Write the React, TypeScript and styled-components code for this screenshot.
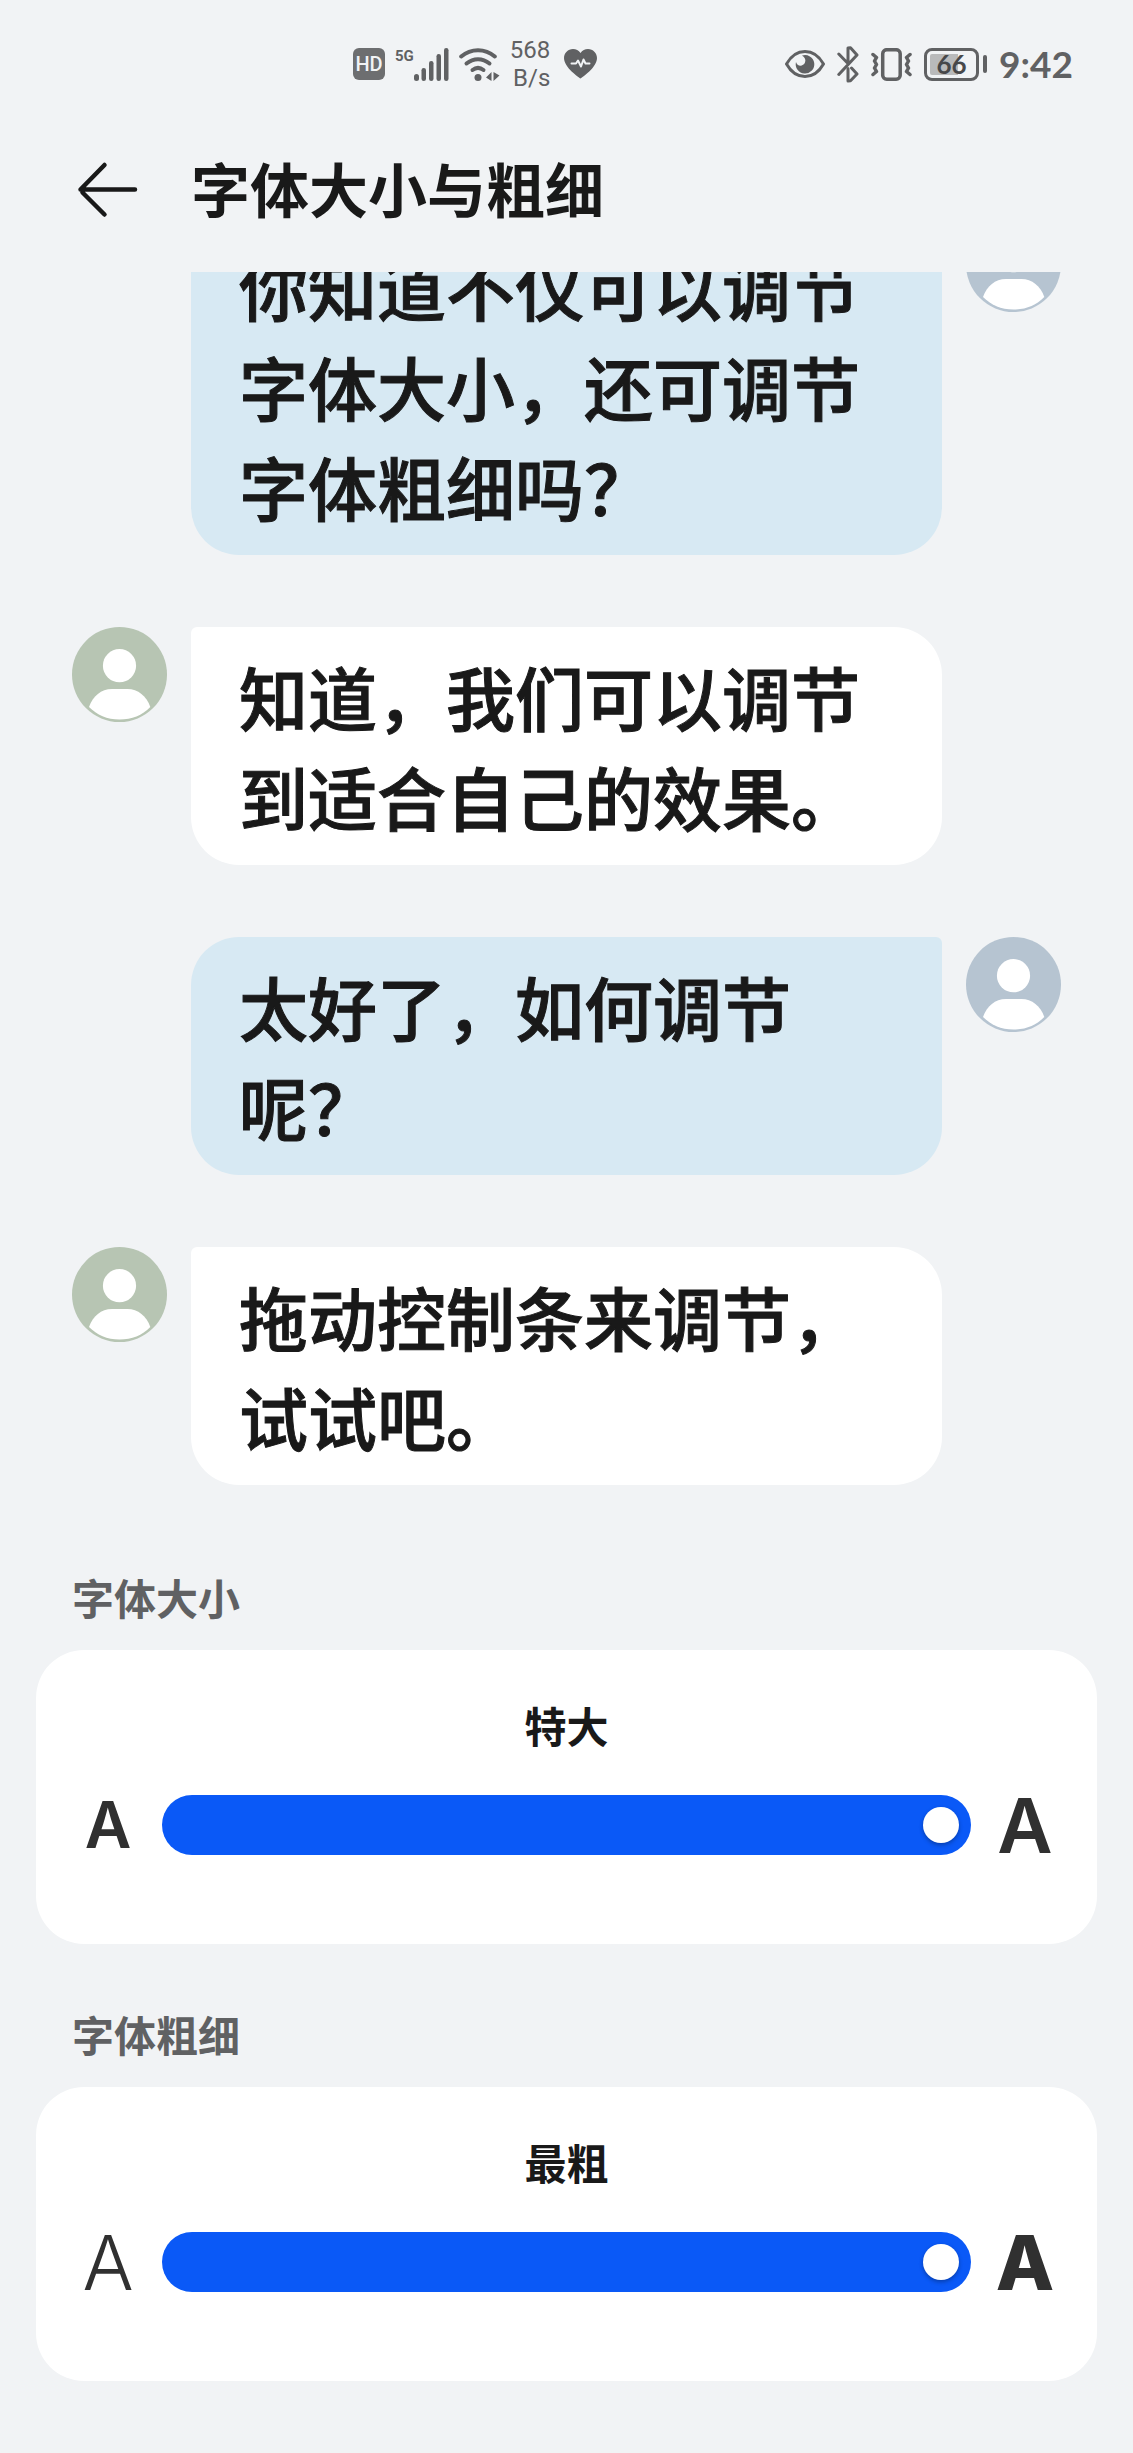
import React, { useId, useState } from 'react';
import styled, { createGlobalStyle } from 'styled-components';

const color = {
  page: '#f1f3f5',
  card: '#ffffff',
  mine: '#d7e9f3',
  ink: '#191919',
  letter: '#303030',
  muted: '#606163',
  accent: '#0a59f7',
  rest: '#e5e7ea',
  green: '#b7c5b3',
  blue: '#b6c4d1',
};

const cjk = '"Noto Sans CJK SC", sans-serif';

const GlobalStyle = createGlobalStyle`
  *, *::before, *::after { box-sizing: border-box; }
  body {
    margin: 0;
    background: ${color.page};
    color: ${color.ink};
    font-family: ${cjk};
  }
`;

const Screen = styled.div`
  display: flex;
  flex-direction: column;
  height: 100vh;
`;

const StatusBar = styled.div`
  display: flex;
  flex: none;
  align-items: center;
  justify-content: space-between;
  height: 128px;
  padding: 0 60px 0 353px;
  color: ${color.muted};
`;

const StatusGroup = styled.div<{ $gap: number }>`
  display: flex;
  align-items: center;
  gap: ${(p) => p.$gap}px;

  svg {
    display: block;
    flex: none;
  }
`;

const HdBadge = styled.span`
  width: 32px;
  border-radius: 6px;
  background: #6d6e70;
  color: ${color.page};
  font: 500 20px/32px Roboto, sans-serif;
  text-align: center;
`;

const Signal = styled.span`
  display: flex;
  align-items: flex-start;
`;

const Network = styled.span`
  font: 700 15px/16px "Liberation Sans Narrow", Roboto, sans-serif;
`;

const Speed = styled.span`
  margin-right: 4px;
  font: 400 24px/28px Roboto, sans-serif;
  text-align: right;
`;

const Battery = styled.span`
  display: flex;
  align-items: center;
  gap: 4px;
`;

const BatteryCell = styled.span`
  width: 55px;
  padding: 3px;
  border: 3px solid ${color.muted};
  border-radius: 8px;
`;

const BatteryLevel = styled.span`
  display: flex;
  justify-content: center;
  border-radius: 2px;
  background: linear-gradient(to right, #b9babb 66%, transparent 66%);
  color: #47484a;
  font: 700 26px/21px Lato, sans-serif;
`;

const BatteryTip = styled.span`
  width: 4px;
  height: 18px;
  border-radius: 2px;
  background: ${color.muted};
`;

const Clock = styled.span`
  font: 700 37px/40px Lato, sans-serif;
`;

const Header = styled.header`
  display: flex;
  flex: none;
  align-items: center;
  gap: 47px;
  height: 144px;
  padding: 0 72px 20px;
`;

const BackButton = styled.button`
  display: flex;
  padding: 0;
  border: 0;
  background: none;
  color: ${color.ink};
  cursor: pointer;
`;

const Title = styled.h1`
  margin: 0;
  padding-bottom: 4px;
  font-size: 59px;
  font-weight: 700;
  line-height: 84px;
`;

const Chat = styled.main`
  display: flex;
  flex: 1;
  flex-direction: column-reverse;
  min-height: 0;
  overflow-y: auto;
  scrollbar-width: none;
`;

const Messages = styled.div`
  display: flex;
  flex-direction: column;
  gap: 72px;
  padding: 0 72px 22px;
`;

const Message = styled.div`
  display: grid;
  grid-template-columns: 95px minmax(0, 1fr) 95px;
  align-items: start;
  gap: 24px;
`;

const Bubble = styled.p<{ $mine: boolean }>`
  grid-column: 2;
  grid-row: 1;
  margin: 0;
  padding: 19px 48px;
  border-radius: ${(p) => (p.$mine ? '48px 6px 48px 48px' : '6px 48px 48px 48px')};
  background: ${(p) => (p.$mine ? color.mine : color.card)};
  font-size: 69px;
  font-weight: 500;
  line-height: 100px;
  -webkit-text-stroke: 1px currentColor;
`;

const AvatarSlot = styled.svg<{ $mine: boolean }>`
  display: block;
  grid-column: ${(p) => (p.$mine ? 3 : 1)};
  grid-row: 1;
`;

const Section = styled.section`
  flex: none;
  padding: 60px 36px 0;

  &:last-child {
    padding-bottom: 72px;
  }
`;

const SectionTitle = styled.h2`
  margin: 0 36px 23px;
  color: ${color.muted};
  font-size: 42px;
  font-weight: 700;
  line-height: 60px;
`;

const Card = styled.div`
  padding: 45px 24px 89px;
  border-radius: 48px;
  background: ${color.card};
`;

const Value = styled.output`
  display: block;
  margin-bottom: 40px;
  font-size: 42px;
  font-weight: 700;
  line-height: 60px;
  text-align: center;
`;

const SliderRow = styled.div`
  display: grid;
  grid-template-columns: 96px minmax(0, 1fr) 96px;
  align-items: center;
  gap: 6px;
`;

const Letter = styled.span<{ $size: number; $weight: number }>`
  color: ${color.letter};
  font-family: Inter, sans-serif;
  font-size: ${(p) => p.$size}px;
  font-weight: ${(p) => p.$weight};
  line-height: 60px;
  text-align: center;
`;

const Range = styled.input`
  width: 100%;
  height: 60px;
  margin: 0;
  padding: 0 12px;
  border-radius: 30px;
  background: linear-gradient(to right, ${color.accent} var(--fill), ${color.rest} var(--fill));
  appearance: none;
  cursor: pointer;

  &::-webkit-slider-thumb {
    width: 36px;
    height: 36px;
    border-radius: 50%;
    background: #ffffff;
    box-shadow: 0 2px 4px rgba(0, 0, 0, 0.3);
    appearance: none;
  }
`;

function Avatar({ mine }: { mine: boolean }) {
  return (
    <AvatarSlot $mine={mine} width="95" height="95" viewBox="0 0 95 95" aria-hidden="true">
      <circle cx="47.5" cy="47.5" r="47.5" fill={mine ? color.blue : color.green} />
      <circle cx="47.5" cy="38.7" r="16.6" fill="#fff" />
      <path
        d="M17 80C21 69 29 62 40 62H55.500C66 62 74.500 69 78.300 80C70 88.500 60 92.500 47.500 92.500S25 88 17 80Z"
        fill="#fff"
      />
    </AvatarSlot>
  );
}

function SignalBars() {
  return (
    <svg width="35" height="33" viewBox="0 0 35 33" fill="currentColor" aria-hidden="true">
      <rect x="0" y="26" width="5" height="7" rx="2.500" />
      <rect x="7.500" y="20" width="4.500" height="13" rx="2.200" />
      <rect x="15" y="13" width="4.500" height="20" rx="2.200" />
      <rect x="22.500" y="6" width="4.500" height="27" rx="2.200" />
      <rect x="30" y="0" width="4.500" height="33" rx="2.200" />
    </svg>
  );
}

function WifiIcon() {
  return (
    <svg width="41" height="33" viewBox="0 0 41 33" fill="none" stroke="currentColor" strokeLinecap="round" aria-hidden="true">
      <path d="M2.200 8.500C12 0 26 0 35.800 8.500" strokeWidth="4" />
      <path d="M7.500 15.500C14.500 9.800 23.500 9.800 30.500 15.500" strokeWidth="4" />
      <path d="M13.500 22C17 19.300 21 19.300 24.500 22" strokeWidth="4" />
      <circle cx="19" cy="29.500" r="3.500" fill="currentColor" stroke="none" />
      <path d="M32.500 24V33L27 29.500ZM34.500 24L40.500 27.500L34.500 33Z" fill="currentColor" stroke="none" />
    </svg>
  );
}

function HeartIcon() {
  return (
    <svg width="33" height="30" viewBox="0 0 33 30" aria-hidden="true">
      <path
        d="M16.500 29.500C15 28.600 0 18.500 0 9C0 4 4 0 9 0C12 0 14.800 1.400 16.500 3.900C18.200 1.400 21 0 24 0C29 0 33 4 33 9C33 18.500 18 28.600 16.500 29.500Z"
        fill="currentColor"
      />
      <path
        d="M7.500 14.500H12L14 11.500L17 17.500L19.500 10.500L21.500 14.500H25.500"
        fill="none"
        stroke={color.page}
        strokeWidth="2"
        strokeLinecap="round"
        strokeLinejoin="round"
      />
    </svg>
  );
}

function EyeIcon() {
  return (
    <svg width="40" height="28" viewBox="0 0 40 28" aria-hidden="true">
      <path
        d="M1.500 14C6 6 12.500 1.500 20 1.500S34 6 38.500 14C34 22 27.500 26.500 20 26.500S6 22 1.500 14Z"
        fill="none"
        stroke="currentColor"
        strokeWidth="3"
        strokeLinejoin="round"
      />
      <path d="M17 5.500A9.300 9.300 0 1 1 11 12C12 16.500 18 17 20 12.500C21 10 20 7 17 5.500Z" fill="currentColor" />
    </svg>
  );
}

function BluetoothIcon() {
  return (
    <svg
      width="22"
      height="37"
      viewBox="0 0 22 37"
      fill="none"
      stroke="currentColor"
      strokeWidth="3"
      strokeLinecap="round"
      strokeLinejoin="round"
      aria-hidden="true"
    >
      <path d="M1.800 8L11 17.500V2L13.500 1.700L20 9L1.800 28.500" />
      <path d="M11 22.500V35L13.500 34.700L20 28L14.500 22" />
    </svg>
  );
}

function VibrateIcon() {
  return (
    <svg
      width="41"
      height="33"
      viewBox="0 0 41 33"
      fill="none"
      stroke="currentColor"
      strokeWidth="3.500"
      strokeLinecap="round"
      strokeLinejoin="round"
      aria-hidden="true"
    >
      <rect x="11.700" y="1.700" width="17.500" height="29.500" rx="4" />
      <path d="M2 6.500L5.500 9.500L3.500 13L5.500 16.500L3.500 20L5.500 23.500L2 26.500" />
      <path d="M39 6.500L35.500 9.500L37.500 13L35.500 16.500L37.500 20L35.500 23.500L39 26.500" />
    </svg>
  );
}

function BackIcon() {
  return (
    <svg
      width="72"
      height="60"
      viewBox="0 0 72 60"
      fill="none"
      stroke="currentColor"
      strokeWidth="4.500"
      strokeLinecap="round"
      strokeLinejoin="round"
      aria-hidden="true"
    >
      <path d="M63 29.500H8.500L32.500 5M10.500 32.500L32.500 54.500" />
    </svg>
  );
}

type Step = { size: number; weight: number };

function SliderSection(props: { title: string; levels: string[]; from: Step; to: Step }) {
  const { title, levels, from, to } = props;
  const id = useId();
  const last = levels.length - 1;
  const [level, setLevel] = useState(last);

  return (
    <Section>
      <SectionTitle>
        <label htmlFor={id}>{title}</label>
      </SectionTitle>
      <Card>
        <Value htmlFor={id}>{levels[level]}</Value>
        <SliderRow>
          <Letter $size={from.size} $weight={from.weight}>A</Letter>
          <Range
            id={id}
            type="range"
            min={0}
            max={last}
            value={level}
            onChange={(e) => setLevel(Number(e.target.value))}
            style={{ '--fill': `${(level / last) * 100}%` } as React.CSSProperties}
          />
          <Letter $size={to.size} $weight={to.weight}>A</Letter>
        </SliderRow>
      </Card>
    </Section>
  );
}

const messages = [
  { mine: true, text: '你知道不仅可以调节字体大小，还可调节字体粗细吗？' },
  { mine: false, text: '知道，我们可以调节到适合自己的效果。' },
  { mine: true, text: '太好了，如何调节呢？' },
  { mine: false, text: '拖动控制条来调节，试试吧。' },
];

export default function App() {
  return (
    <Screen lang="zh-CN">
      <GlobalStyle />
      <StatusBar>
        <StatusGroup $gap={10}>
          <HdBadge>HD</HdBadge>
          <Signal>
            <Network>5G</Network>
            <SignalBars />
          </Signal>
          <WifiIcon />
          <Speed>
            568
            <br />
            B/s
          </Speed>
          <HeartIcon />
        </StatusGroup>
        <StatusGroup $gap={12}>
          <EyeIcon />
          <BluetoothIcon />
          <VibrateIcon />
          <Battery>
            <BatteryCell>
              <BatteryLevel>66</BatteryLevel>
            </BatteryCell>
            <BatteryTip />
          </Battery>
          <Clock>9:42</Clock>
        </StatusGroup>
      </StatusBar>
      <Header>
        <BackButton type="button" aria-label="返回">
          <BackIcon />
        </BackButton>
        <Title>字体大小与粗细</Title>
      </Header>
      <Chat>
        <Messages>
          {messages.map((m) => (
            <Message key={m.text}>
              <Avatar mine={m.mine} />
              <Bubble $mine={m.mine}>{m.text}</Bubble>
            </Message>
          ))}
        </Messages>
      </Chat>
      <SliderSection
        title="字体大小"
        levels={['小', '标准', '大', '超大', '特大']}
        from={{ size: 64, weight: 600 }}
        to={{ size: 76, weight: 600 }}
      />
      <SliderSection
        title="字体粗细"
        levels={['最细', '标准', '最粗']}
        from={{ size: 76, weight: 300 }}
        to={{ size: 76, weight: 800 }}
      />
    </Screen>
  );
}
